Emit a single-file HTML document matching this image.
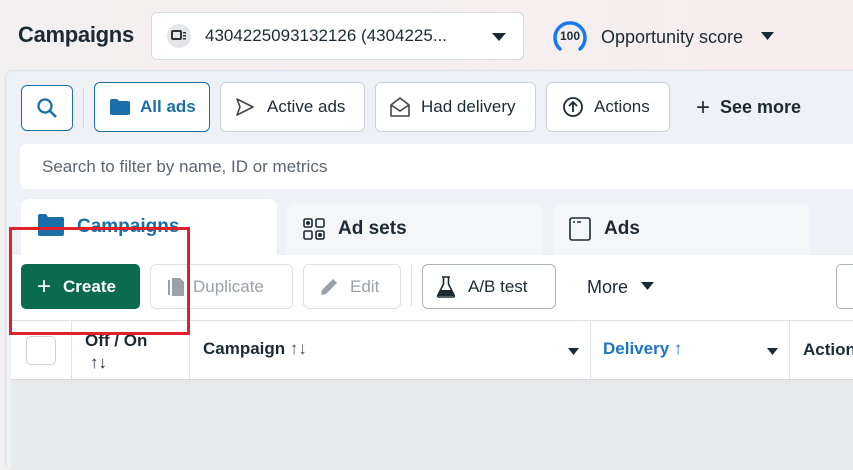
<!DOCTYPE html>
<html><head><style>
*{box-sizing:border-box;margin:0;padding:0}
body{width:853px;height:462px;overflow:hidden;position:relative;font-family:"Liberation Sans",sans-serif;background:linear-gradient(90deg,#f3f0f1,#f6eeee);color:#1c2b33}
.a{position:absolute}
.btn{position:absolute;background:#fff;border:1px solid #cbd2d9;border-radius:6px;display:flex;align-items:center;font-size:17px;color:#1c2b33}
.t{font-size:17px}
</style></head><body>
<div class="a" style="left:18px;top:22px;font-size:22px;font-weight:bold;letter-spacing:-0.3px">Campaigns</div>
<div class="btn" style="left:151px;top:12px;width:373px;height:48px;border-color:#d5d8dc">
 <div style="margin-left:15px;width:24px;height:24px;border-radius:50%;background:#e4e6ea;display:flex;align-items:center;justify-content:center"><svg width="16" height="12"><rect x="1" y="1" width="9" height="8" rx="1" fill="none" stroke="#333" stroke-width="2"/><rect x="12" y="2" width="3" height="1.5" fill="#333"/><rect x="12" y="5" width="3" height="1.5" fill="#333"/><rect x="12" y="8" width="3" height="1.5" fill="#333"/></svg></div>
 <span style="margin-left:14px;font-size:17px">4304225093132126 (4304225...</span>
 <svg class="a" style="left:340px;top:20px" width="14" height="9"><path d="M0 0H14L7 8Z" fill="#1c2b33"/></svg>
</div>
<svg class="a" style="left:551px;top:18px" width="38" height="34"><path d="M9 31A15 15 0 1 1 29 31" fill="none" stroke="#1877f2" stroke-width="3.5" stroke-linecap="round"/><text x="19" y="22" font-size="12" font-weight="bold" text-anchor="middle" font-family="Liberation Sans" fill="#1c2b33">100</text></svg>
<div class="a t" style="left:601px;top:27px;font-size:18px">Opportunity score</div>
<svg class="a" style="left:761px;top:32px" width="13" height="8"><path d="M0 0H13L6.5 8Z" fill="#1c2b33"/></svg>

<div class="a" style="left:5px;top:70px;width:860px;height:400px;background:#eef1f5;border:1px solid #dfe2e6;border-radius:8px"></div>
<div class="btn" style="left:21px;top:85px;width:52px;height:46px;border-color:#1b6fa8;justify-content:center"><svg width="22" height="22"><circle cx="9" cy="9" r="6.5" fill="none" stroke="#1b6fa8" stroke-width="2.3"/><path d="M14 14L20 20" stroke="#1b6fa8" stroke-width="2.5"/></svg></div>
<div class="a" style="left:83px;top:88px;width:1px;height:40px;background:#d5d9de"></div>
<div class="btn" style="left:94px;top:82px;width:116px;height:50px;border-color:#1b6fa8;color:#1b6fa8;font-weight:bold"><svg style="margin:0 9px 0 14px" width="22" height="18"><path d="M1 3Q1 1 3 1H8L10 3H19Q21 3 21 5V15Q21 17 19 17H3Q1 17 1 15Z" fill="#1b6fa8"/></svg>All ads</div>
<div class="btn" style="left:220px;top:82px;width:145px;height:50px"><svg style="margin:0 12px 0 14px" width="20" height="20"><path d="M2 2L18 10L2 18L5 10Z" fill="none" stroke="#444" stroke-width="1.6" stroke-linejoin="round"/></svg>Active ads</div>
<div class="btn" style="left:375px;top:82px;width:161px;height:50px"><svg style="margin:0 10px 0 13px" width="22" height="22"><path d="M2 9L11 2L20 9V20H2Z M2 9L11 15L20 9" fill="none" stroke="#444" stroke-width="1.6" stroke-linejoin="round"/></svg>Had delivery</div>
<div class="btn" style="left:546px;top:82px;width:124px;height:50px"><svg style="margin:0 10px 0 15px" width="22" height="22"><circle cx="11" cy="11" r="9" fill="none" stroke="#1c2b33" stroke-width="1.8"/><path d="M11 16V6M7 10L11 6L15 10" fill="none" stroke="#1c2b33" stroke-width="1.8"/></svg>Actions</div>
<div class="a t" style="left:696px;top:97px;font-weight:bold;font-size:18px;display:flex;align-items:center"><span style="font-weight:normal;font-size:24px;margin-right:10px;line-height:18px">+</span>See more</div>
<div class="a" style="left:20px;top:144px;width:840px;height:45px;background:#fff;border-radius:6px;font-size:17px;color:#5d6670;padding:13px 0 0 22px">Search to filter by name, ID or metrics</div>

<div class="a" style="left:21px;top:199px;width:256px;height:60px;background:#fff;border-radius:8px 8px 0 0"></div>
<svg class="a" style="left:37px;top:213px" width="28" height="24"><path d="M1 3Q1 1 3 1H9L11 4H25Q27 4 27 6V21Q27 23 25 23H3Q1 23 1 21Z" fill="#1b6fa8"/></svg>
<div class="a" style="left:77px;top:216px;font-size:19px;font-weight:bold;color:#1b6fa8">Campaigns</div>
<div class="a" style="left:287px;top:204px;width:256px;height:52px;background:#f5f6f8;border-radius:8px 8px 0 0"></div>
<svg class="a" style="left:303px;top:218px" width="23" height="23"><g fill="none" stroke="#1c2b33" stroke-width="1.6"><rect x="1" y="1" width="8" height="8" rx="1.5"/><rect x="13" y="1" width="8" height="8" rx="1.5"/><rect x="1" y="13" width="8" height="8" rx="1.5"/><rect x="13" y="13" width="8" height="8" rx="1.5"/></g><circle cx="5" cy="5" r="2" fill="#1c2b33"/><circle cx="17" cy="17" r="2" fill="#1c2b33"/></svg>
<div class="a" style="left:338px;top:218px;font-size:19px;font-weight:bold">Ad sets</div>
<div class="a" style="left:553px;top:204px;width:257px;height:52px;background:#f5f6f8;border-radius:8px 8px 0 0"></div>
<svg class="a" style="left:569px;top:217px" width="22" height="24"><rect x="1" y="1" width="20" height="22" rx="2" fill="none" stroke="#1c2b33" stroke-width="1.6"/><path d="M4 5H6M8 5H12" stroke="#1c2b33" stroke-width="1.6"/></svg>
<div class="a" style="left:604px;top:218px;font-size:19px;font-weight:bold">Ads</div>

<div class="a" style="left:11px;top:255px;width:850px;height:65px;background:#fff"></div>
<div class="a" style="left:21px;top:264px;width:119px;height:45px;background:#0a6b4f;border-radius:5px;color:#fff;font-weight:bold;font-size:17px;display:flex;align-items:center"><span style="font-weight:normal;font-size:24px;margin:0 12px 0 16px">+</span>Create</div>
<div class="btn" style="left:150px;top:264px;width:143px;height:45px;color:#9aa1a8;border-color:#dde1e5"><svg style="margin:0 6px 0 14px" width="22" height="22"><path d="M3 4V19H5V4Z M7 2H15L19 6V20H7Z" fill="#9aa1a8"/></svg>Duplicate</div>
<div class="btn" style="left:303px;top:264px;width:98px;height:45px;color:#9aa1a8;border-color:#dde1e5"><svg style="margin:0 10px 0 14px" width="22" height="22"><path d="M3 19L4 14L15 3L19 7L8 18Z" fill="#9aa1a8"/></svg>Edit</div>
<div class="a" style="left:411px;top:266px;width:1px;height:40px;background:#dde1e5"></div>
<div class="btn" style="left:422px;top:264px;width:134px;height:45px;border-color:#aab2ba"><svg style="margin:0 12px 0 13px" width="20" height="22"><path d="M6 1H14M7.5 1V8L2 19Q1 21 3 21H17Q19 21 18 19L12.5 8V1" fill="none" stroke="#1c2b33" stroke-width="1.6"/><path d="M4 14H16L18 20H2Z" fill="#1c2b33"/></svg>A/B test</div>
<div class="a t" style="left:587px;top:277px;font-size:18px">More</div>
<svg class="a" style="left:641px;top:282px" width="13" height="8"><path d="M0 0H13L6.5 8Z" fill="#1c2b33"/></svg>
<div class="a" style="left:836px;top:264px;width:30px;height:45px;border:1px solid #aab2ba;border-radius:5px;background:#fff"></div>

<div class="a" style="left:11px;top:320px;width:850px;height:60px;background:#fff;border-top:1px solid #dde1e5;border-bottom:1px solid #d5d9de"></div>
<div class="a" style="left:26px;top:336px;width:30px;height:29px;border:1px solid #cbd2d9;border-radius:5px;background:#fff"></div>
<div class="a" style="left:71px;top:321px;width:1px;height:58px;background:#e2e5e8"></div>
<div class="a" style="left:189px;top:321px;width:1px;height:58px;background:#e2e5e8"></div>
<div class="a" style="left:590px;top:321px;width:1px;height:58px;background:#e2e5e8"></div>
<div class="a" style="left:789px;top:321px;width:1px;height:58px;background:#e2e5e8"></div>
<div class="a" style="left:85px;top:330px;font-size:17px;font-weight:bold;line-height:22px">Off / On<br><span style="font-weight:normal;margin-left:5px">↑↓</span></div>
<div class="a" style="left:203px;top:339px;font-size:17px;font-weight:bold">Campaign <span style="font-weight:normal;color:#555">↑↓</span></div>
<svg class="a" style="left:568px;top:348px" width="11" height="7"><path d="M0 0H11L5.5 7Z" fill="#1c2b33"/></svg>
<div class="a" style="left:603px;top:339px;font-size:17px;font-weight:bold;color:#1b74c9">Delivery <span style="font-weight:normal">↑</span></div>
<svg class="a" style="left:767px;top:348px" width="11" height="7"><path d="M0 0H11L5.5 7Z" fill="#1c2b33"/></svg>
<div class="a" style="left:803px;top:340px;font-size:17px;font-weight:bold;white-space:nowrap">Actions</div>
<div class="a" style="left:11px;top:380px;width:850px;height:90px;background:#e8e9eb"></div>

<div class="a" style="left:9px;top:227px;width:181px;height:108px;border:3px solid #e0202a"></div>
</body></html>
